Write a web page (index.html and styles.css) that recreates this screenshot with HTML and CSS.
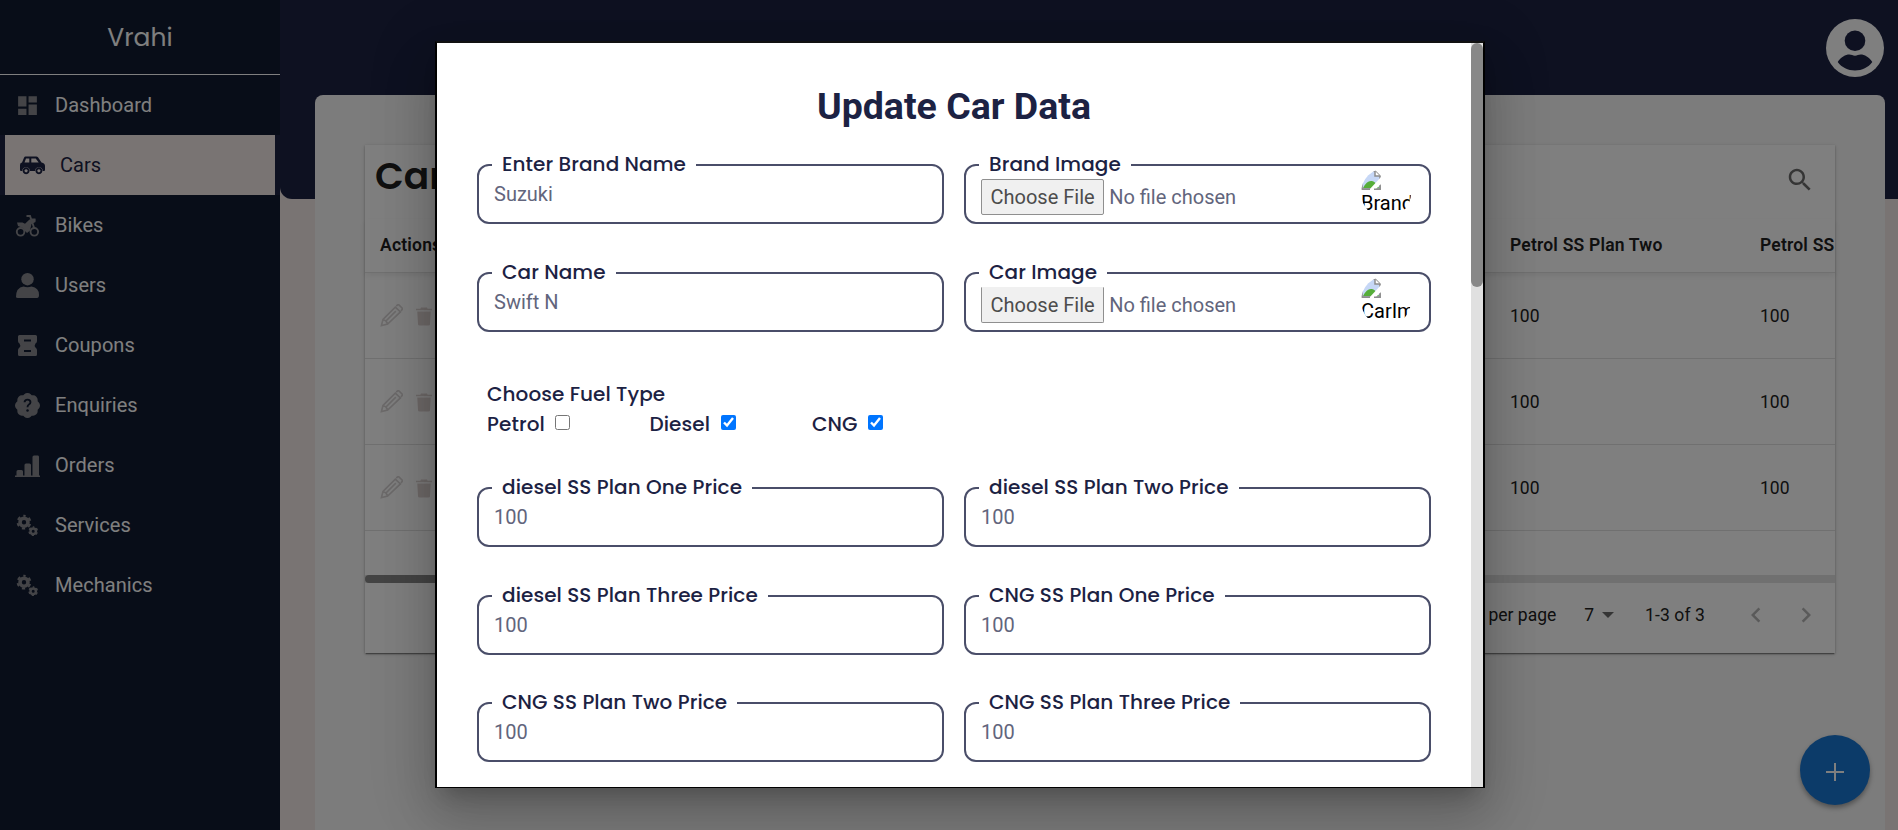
FILE: index.html
```html
<!DOCTYPE html>
<html lang="en">
<head>
<meta charset="utf-8">
<title>Vrahi</title>
<link rel="stylesheet" href="styles.css">
</head>
<body>
<svg width="0" height="0" class="defs">
  <symbol id="gears" viewBox="0 0 25 25">
    <circle cx="9" cy="9.2" r="4" fill="none" stroke="currentColor" stroke-width="3.6"/>
    <circle cx="9" cy="9.2" r="6.4" fill="none" stroke="currentColor" stroke-width="2" stroke-dasharray="3.35 3.35" stroke-dashoffset="1.7" transform="rotate(-90 9 9.2)"/>
    <circle cx="18.2" cy="18.2" r="2.7" fill="none" stroke="currentColor" stroke-width="2.4"/>
    <circle cx="18.2" cy="18.2" r="4.2" fill="none" stroke="currentColor" stroke-width="1.4" stroke-dasharray="2.2 2.2" stroke-dashoffset="1.1"  transform="rotate(-90 18.2 18.2)"/>
  </symbol>
  <symbol id="pencil" viewBox="0 0 24 24">
    <path d="M1.5 22.5l1.6-6.3L16 3.2l5.3 5.1L8 21z M17 2.2l1.3-1.2q.8-.6 1.7.2l3 3q.8.9 0 1.7l-1.2 1.2M6.5 17.5L16.5 7.5M3.1 16.2q3.6.8 4.9 4.8" fill="none" stroke="currentColor" stroke-width="1.7"/>
  </symbol>
  <symbol id="trash" viewBox="0 0 16 20">
    <path d="M5 1.500h6l.6 1.300H16v1.400H0V2.800h4.400zM1.300 5.500h13.400l-.7 12.700q-.1 1.300-1.400 1.300H3.400q-1.300 0-1.400-1.300z" fill="currentColor"/>
  </symbol>
  <symbol id="broken" viewBox="0 0 20 20">
    <path d="M1 1h13l5 5v13H1z" fill="#c6d7f6" stroke="#8d8d8d" stroke-width="1.600"/>
    <path d="M14 1v5h5" fill="#fff" stroke="#8d8d8d" stroke-width="1.500"/>
    <path d="M2 18q4-8 9-7 4 1 7 7z" fill="#56ae3a"/>
    <path d="M20 7L8 20h6l6-6z" fill="#fff"/>
    <path d="M13 19.200h6.200v-4" fill="none" stroke="#8d8d8d" stroke-width="1.400"/>
    <path d="M1 19.200h8" fill="none" stroke="#8d8d8d" stroke-width="1.400"/>
  </symbol>
</svg>
<div class="app">
  <nav class="sidebar">
    <div class="brand">Vrahi</div>
    <a class="item"><svg class="ico" viewBox="0 0 24 24"><path d="M3 13h8V3H3v10zm0 8h8v-6H3v6zm10 0h8V11h-8v10zm0-18v6h8V3h-8z"/></svg>Dashboard</a>
    <div class="active-wrap"><a class="item active"><svg class="ico" viewBox="0 0 25 25"><path fill-rule="evenodd" d="M5.500 3.500h10.800q1 0 1.700.8L21.500 9.500q3.500.6 3.500 3.500v4q0 1-1 1h-1.300a3.800 3.800 0 0 0-7.600 0H9.900a3.800 3.800 0 0 0-7.600 0H1q-1 0-1-1v-5q0-2.200 2-2.500l2-4.700q.5-1.300 1.500-1.300zM6 5.500L4.500 9.500h4.800V5.500zM11.300 5.500v4h7.400l-3-4z"/><path fill-rule="evenodd" d="M6.100 14.300a3.500 3.500 0 1 0 .01 0zm0 1.900a1.600 1.600 0 1 1-.01 0zM18.900 14.300a3.500 3.500 0 1 0 .01 0zm0 1.900a1.600 1.600 0 1 1-.01 0z"/></svg>Cars</a></div>
    <a class="item"><svg class="ico" viewBox="0 0 25 25"><g fill="none" stroke="currentColor" stroke-width="1.900"><circle cx="5.600" cy="18.800" r="3.800"/><circle cx="19.300" cy="18.800" r="3.800"/><path d="M11.500 3h3.500l4.500 13M15.500 6.500h5"/></g><path d="M2 9.500h5.500l2.500 1.300 4.500-4.300h6v2.500l-4 2-1.500 6.500-3 2.500-2-2-2-3-5-2z"/></svg>Bikes</a>
    <a class="item"><svg class="ico" viewBox="0 0 25 25"><circle cx="12.500" cy="6.200" r="6.200"/><path d="M1 24q0-9.500 7.500-10.500 4 1.600 8 0Q24 14.500 24 22q0 3-2 3H3q-2 0-2-1z"/></svg>Users</a>
    <a class="item"><svg class="ico" viewBox="0 0 25 25"><path fill-rule="evenodd" d="M4.500 2h16q1.500 0 1.500 1.500V8q0 1.500-1.500 2.500-1.500 2 0 4Q22 15.500 22 17v4.500q0 1.500-1.500 1.500h-16Q3 23 3 21.500V17q0-1.500 1.500-2.500 1.500-2 0-4Q3 9.500 3 8V3.500Q3 2 4.500 2zM9 6.500v2h7v-2zM9 17v2h7v-2z"/></svg>Coupons</a>
    <a class="item"><svg class="ico" viewBox="0 0 16 16"><path d="M5.933.87a2.89 2.89 0 0 1 4.134 0l.622.638.89-.011a2.89 2.89 0 0 1 2.924 2.924l-.01.89.636.622a2.89 2.89 0 0 1 0 4.134l-.637.622.011.89a2.89 2.89 0 0 1-2.924 2.924l-.89-.01-.622.636a2.89 2.89 0 0 1-4.134 0l-.622-.637-.89.011a2.89 2.89 0 0 1-2.924-2.924l.01-.89-.636-.622a2.89 2.89 0 0 1 0-4.134l.637-.622-.011-.89a2.89 2.89 0 0 1 2.924-2.924l.89.01.622-.636z"/><path d="M6.100 5.900q.1-1.700 1.900-1.700 1.900 0 1.900 1.700 0 .9-1 1.500-.9.600-.9 1.700" fill="none" stroke="#101a30" stroke-width="1.200"/><circle cx="8" cy="11.200" r=".8" fill="#101a30"/></svg>Enquiries</a>
    <a class="item"><svg class="ico" viewBox="0 0 25 25"><path d="M0 22.500h1.500v-4q0-1.500 1.500-1.500h3.500q1.500 0 1.500 1.500v4h1.500V12q0-1.500 1.500-1.500h3.500q1.500 0 1.500 1.500v10.500h1.500V4q0-1.500 1.500-1.500h4Q24 2.500 24 4v18.500h1V24H0z"/></svg>Orders</a>
    <a class="item"><svg class="ico"><use href="#gears"/></svg>Services</a>
    <a class="item"><svg class="ico"><use href="#gears"/></svg>Mechanics</a>
  </nav>
  <main class="main">
    <div class="banner"></div>
    <svg class="avatar" viewBox="0 0 58 58"><circle cx="29" cy="29" r="29" fill="#fff"/><circle cx="29" cy="21.700" r="10.300" fill="#1c2243"/><path d="M11.700 43c3-5 8-7.500 11.500-7.500 2.500 0 3.500 1.200 5.800 1.200s3.300-1.200 5.800-1.200c3.500 0 8.500 2.500 11.500 7.500-4 5.500-10.300 8.500-17.300 8.500S15.700 48.500 11.700 43z" fill="#1c2243"/></svg>
    <section class="panel">
      <div class="card">
        <header class="toolbar"><h2>Cars</h2><svg class="search" viewBox="0 0 24 24"><path d="M15.500 14h-.79l-.28-.27C15.410 12.590 16 11.110 16 9.500 16 5.910 13.090 3 9.500 3S3 5.910 3 9.500 5.910 16 9.500 16c1.610 0 3.090-.59 4.230-1.570l.27.28v.79l5 4.990L20.490 19l-4.990-5zm-6 0C7.010 14 5 11.990 5 9.500S7.010 5 9.500 5 14 7.010 14 9.500 11.990 14 9.500 14z"/></svg></header>
        <div class="row head"><span>Actions</span><span>Petrol SS Plan Two</span><span>Petrol SS</span></div>
        <div class="row"><span class="acts"><svg class="pencil"><use href="#pencil"/></svg><svg class="trash"><use href="#trash"/></svg></span><span>100</span><span>100</span></div>
        <div class="row"><span class="acts"><svg class="pencil"><use href="#pencil"/></svg><svg class="trash"><use href="#trash"/></svg></span><span>100</span><span>100</span></div>
        <div class="row"><span class="acts"><svg class="pencil"><use href="#pencil"/></svg><svg class="trash"><use href="#trash"/></svg></span><span>100</span><span>100</span></div>
        <div class="hscroll"><div class="hthumb"></div></div>
        <footer class="pager"><span class="per">Rows per page</span><span class="num">7</span><svg class="caret" viewBox="0 0 12 6"><path d="M0 0h12L6 6z"/></svg><span class="range">1-3 of 3</span><svg class="chev" viewBox="0 0 24 24"><path d="M15.410 7.410L14 6l-6 6 6 6 1.410-1.410L10.830 12z"/></svg><svg class="chev next" viewBox="0 0 24 24"><path d="M10 6L8.590 7.410 13.170 12l-4.580 4.590L10 18l6-6z"/></svg></footer>
      </div>
    </section>
    <button class="fab"><svg viewBox="0 0 18 18"><path d="M9 0v18M0 9h18" stroke="#fff" stroke-width="2"/></svg></button>
  </main>
</div>
<div class="backdrop"></div>
<div class="modal">
  <form class="form">
    <h1>Update Car Data</h1>
    <div class="grid">
      <fieldset><legend>Enter Brand Name</legend><div class="value">Suzuki</div></fieldset>
      <fieldset><legend>Brand Image</legend><div class="file"><span class="choose">Choose File</span><span class="none">No file chosen</span><div class="thumb"><svg><use href="#broken"/></svg><span>Brand</span></div></div></fieldset>
      <fieldset><legend>Car Name</legend><div class="value">Swift N</div></fieldset>
      <fieldset><legend>Car Image</legend><div class="file low"><span class="choose">Choose File</span><span class="none">No file chosen</span><div class="thumb"><svg><use href="#broken"/></svg><span>CarIm</span></div></div></fieldset>
    </div>
    <div class="fuel">
      <div>Choose Fuel Type</div>
      <div class="options"><label>Petrol<input type="checkbox"></label><label>Diesel<input type="checkbox" checked></label><label>CNG<input type="checkbox" checked></label></div>
    </div>
    <div class="grid plans">
      <fieldset><legend>diesel SS Plan One Price</legend><div class="value">100</div></fieldset>
      <fieldset><legend>diesel SS Plan Two Price</legend><div class="value">100</div></fieldset>
      <fieldset><legend>diesel SS Plan Three Price</legend><div class="value">100</div></fieldset>
      <fieldset><legend>CNG SS Plan One Price</legend><div class="value">100</div></fieldset>
      <fieldset><legend>CNG SS Plan Two Price</legend><div class="value">100</div></fieldset>
      <fieldset><legend>CNG SS Plan Three Price</legend><div class="value">100</div></fieldset>
    </div>
  </form>
  <div class="vscroll"><div class="vthumb"></div></div>
</div>
</body>
</html>
```
FILE: styles.css
```css
* { box-sizing: border-box; }
body { margin: 0; height: 830px; overflow: hidden; font-family: Roboto, sans-serif; background: #f2e9e6; }
.defs { position: absolute; }
svg { display: block; flex: none; }
.app { display: flex; height: 830px; }
.sidebar { width: 280px; background: #101a30; color: #fff; }
.brand { height: 75px; border-bottom: 1px solid #fff; text-align: center; font: 25px/75px Poppins, Inter, sans-serif; }
.item { display: flex; align-items: center; height: 60px; padding-left: 15px; gap: 15px; font-size: 20px; letter-spacing: .05px; }
.ico { width: 25px; height: 25px; fill: currentColor; color: #88898f; }
.active-wrap { padding: 0 5px; background: #1c2243; }
.active { background: #f2e9e6; color: #1c2243; }
.active .ico { color: #1c2243; }
.main { position: relative; flex: 1; display: grid; }
.banner { grid-area: 1 / 1; height: 199px; background: #1c2243; border-bottom-left-radius: 12px; }
.avatar { position: absolute; right: 14px; top: 19px; width: 58px; height: 58px; }
.panel { grid-area: 1 / 1; position: relative; z-index: 1; margin: 95px 13px 0 35px; padding: 50px; background: #f8f8f8; border-radius: 8px 8px 0 0; }
.card { height: 508px; display: flex; flex-direction: column; background: #fff; box-shadow: 0 2px 1px -1px rgba(0,0,0,.3), 0 1px 2px rgba(0,0,0,.25), 0 1px 4px rgba(0,0,0,.12); }
.toolbar { height: 74px; display: flex; justify-content: space-between; padding: 0 20px 0 10px; align-items: center; }
.toolbar h2 { margin: -10px 0 0; font: 600 37.500px/1 Poppins, Inter, sans-serif; color: #212121; }
.search { width: 30px; height: 30px; margin-top: -5px; fill: #6b6b6b; }
.row { display: grid; grid-template-columns: 1130px 250px 75px; height: 86px; padding-left: 15px; align-items: center; font-size: 17.5px; color: #212121; border-bottom: 1px solid #e0e0e0; overflow: hidden; white-space: nowrap; }
.row.head { height: 54px; padding-bottom: 2px; flex: none; font-weight: 600; letter-spacing: .2px; color: #212121; box-shadow: 0 3px 6px rgba(0,0,0,.07); }
.row .acts { display: flex; gap: 13px; align-items: center; }
.pencil { width: 23px; height: 23px; color: #d8d4d5; }
.trash { width: 16px; height: 20px; color: #ddd2d1; }
.hscroll { margin-top: 44px; height: 8px; background: #e0e0e0; }
.hthumb { width: 700px; height: 8px; border-radius: 4px; background: #888; }
.pager { flex: 1; display: flex; align-items: center; justify-content: flex-end; font-size: 17.500px; padding: 0 14px 6px; color: #212121; }
.num { margin-left: 28px; }
.caret { width: 12px; height: 6px; margin-left: 8px; fill: #6b6b6b; }
.range { margin-left: 31px; letter-spacing: .1px; }
.chev { width: 30px; height: 30px; margin-left: 36px; fill: #b5b5b5; }
.chev.next { margin-left: 20px; }
.fab { position: absolute; z-index: 2; right: 28px; bottom: 25px; width: 70px; height: 70px; border: 0; border-radius: 50%; background: #1976d2; display: grid; place-items: center; padding: 4px 0 0; box-shadow: 0 3px 5px rgba(0,0,0,.35); }
.fab svg { width: 18px; height: 18px; }
.backdrop { position: absolute; inset: 0; z-index: 5; background: rgba(0,0,0,.5); }
.modal { position: absolute; z-index: 6; left: 435px; top: 41px; width: 1050px; height: 747px; border: 2px solid #000; border-top-color: #111; border-bottom-width: 1px; background: #fff; display: flex; color: #1c2243; box-shadow: 0 14px 19px -9px rgba(0,0,0,.2), 0 30px 48px 4px rgba(0,0,0,.14), 0 11px 58px 10px rgba(0,0,0,.12); }
.form { width: 1034px; padding: 40px; }
h1 { margin: 0; text-align: center; font: 700 37.500px/46px Roboto, sans-serif; }
.grid { display: grid; grid-template-columns: 467px 467px; column-gap: 20px; row-gap: 34px; margin-top: 21px; }
fieldset { margin: 0; min-width: 0; height: 74px; border: 2px solid #4a4e69; border-radius: 12px; padding: 0 13px; }
legend { height: 30px; padding: 0 10px; font: 500 20px/28px Poppins, Inter, sans-serif; letter-spacing: .07px; }
.value { padding-left: 2px; font-size: 20px; line-height: 28px; color: #62657c; }
.file { position: relative; display: flex; align-items: flex-start; height: 40px; font-size: 20px; color: #62657c; padding-left: 2px; }
.choose { height: 36px; margin-top: -1px; padding: 0 8.500px; font-size: 20px; line-height: 34px; border: 1px solid #8f8f8f; border-radius: 2px; background: #f0f0f0; color: #4c4c4c; }
.none { margin: 0 0 0 5px; line-height: 34px; }
.thumb { position: absolute; right: 5px; top: -12px; width: 50px; height: 50px; border-radius: 50%; overflow: hidden; color: #000; }
.thumb svg { width: 20px; height: 20px; margin-top: 2px; }
.thumb span { display: block; line-height: 24px; margin-top: 1px; }
.low .choose { border-top-color: #f0f0f0; border-radius: 0 0 2px 2px; }
.fuel { margin: 47px 0 0 10px; font: 500 20px/30px Poppins, Inter, sans-serif; letter-spacing: .07px; }
.options { display: grid; grid-template-columns: repeat(3, 162.500px); }
.options label { display: flex; }
.options input { width: 15px; height: 15px; margin: 6px 0 0 10.500px; }
.plans { margin-top: 34px; row-gap: 33.500px; }
.vscroll { width: 12px; background: #e0e0e0; }
.vthumb { height: 244px; border-radius: 6px; background: #888; }
```
